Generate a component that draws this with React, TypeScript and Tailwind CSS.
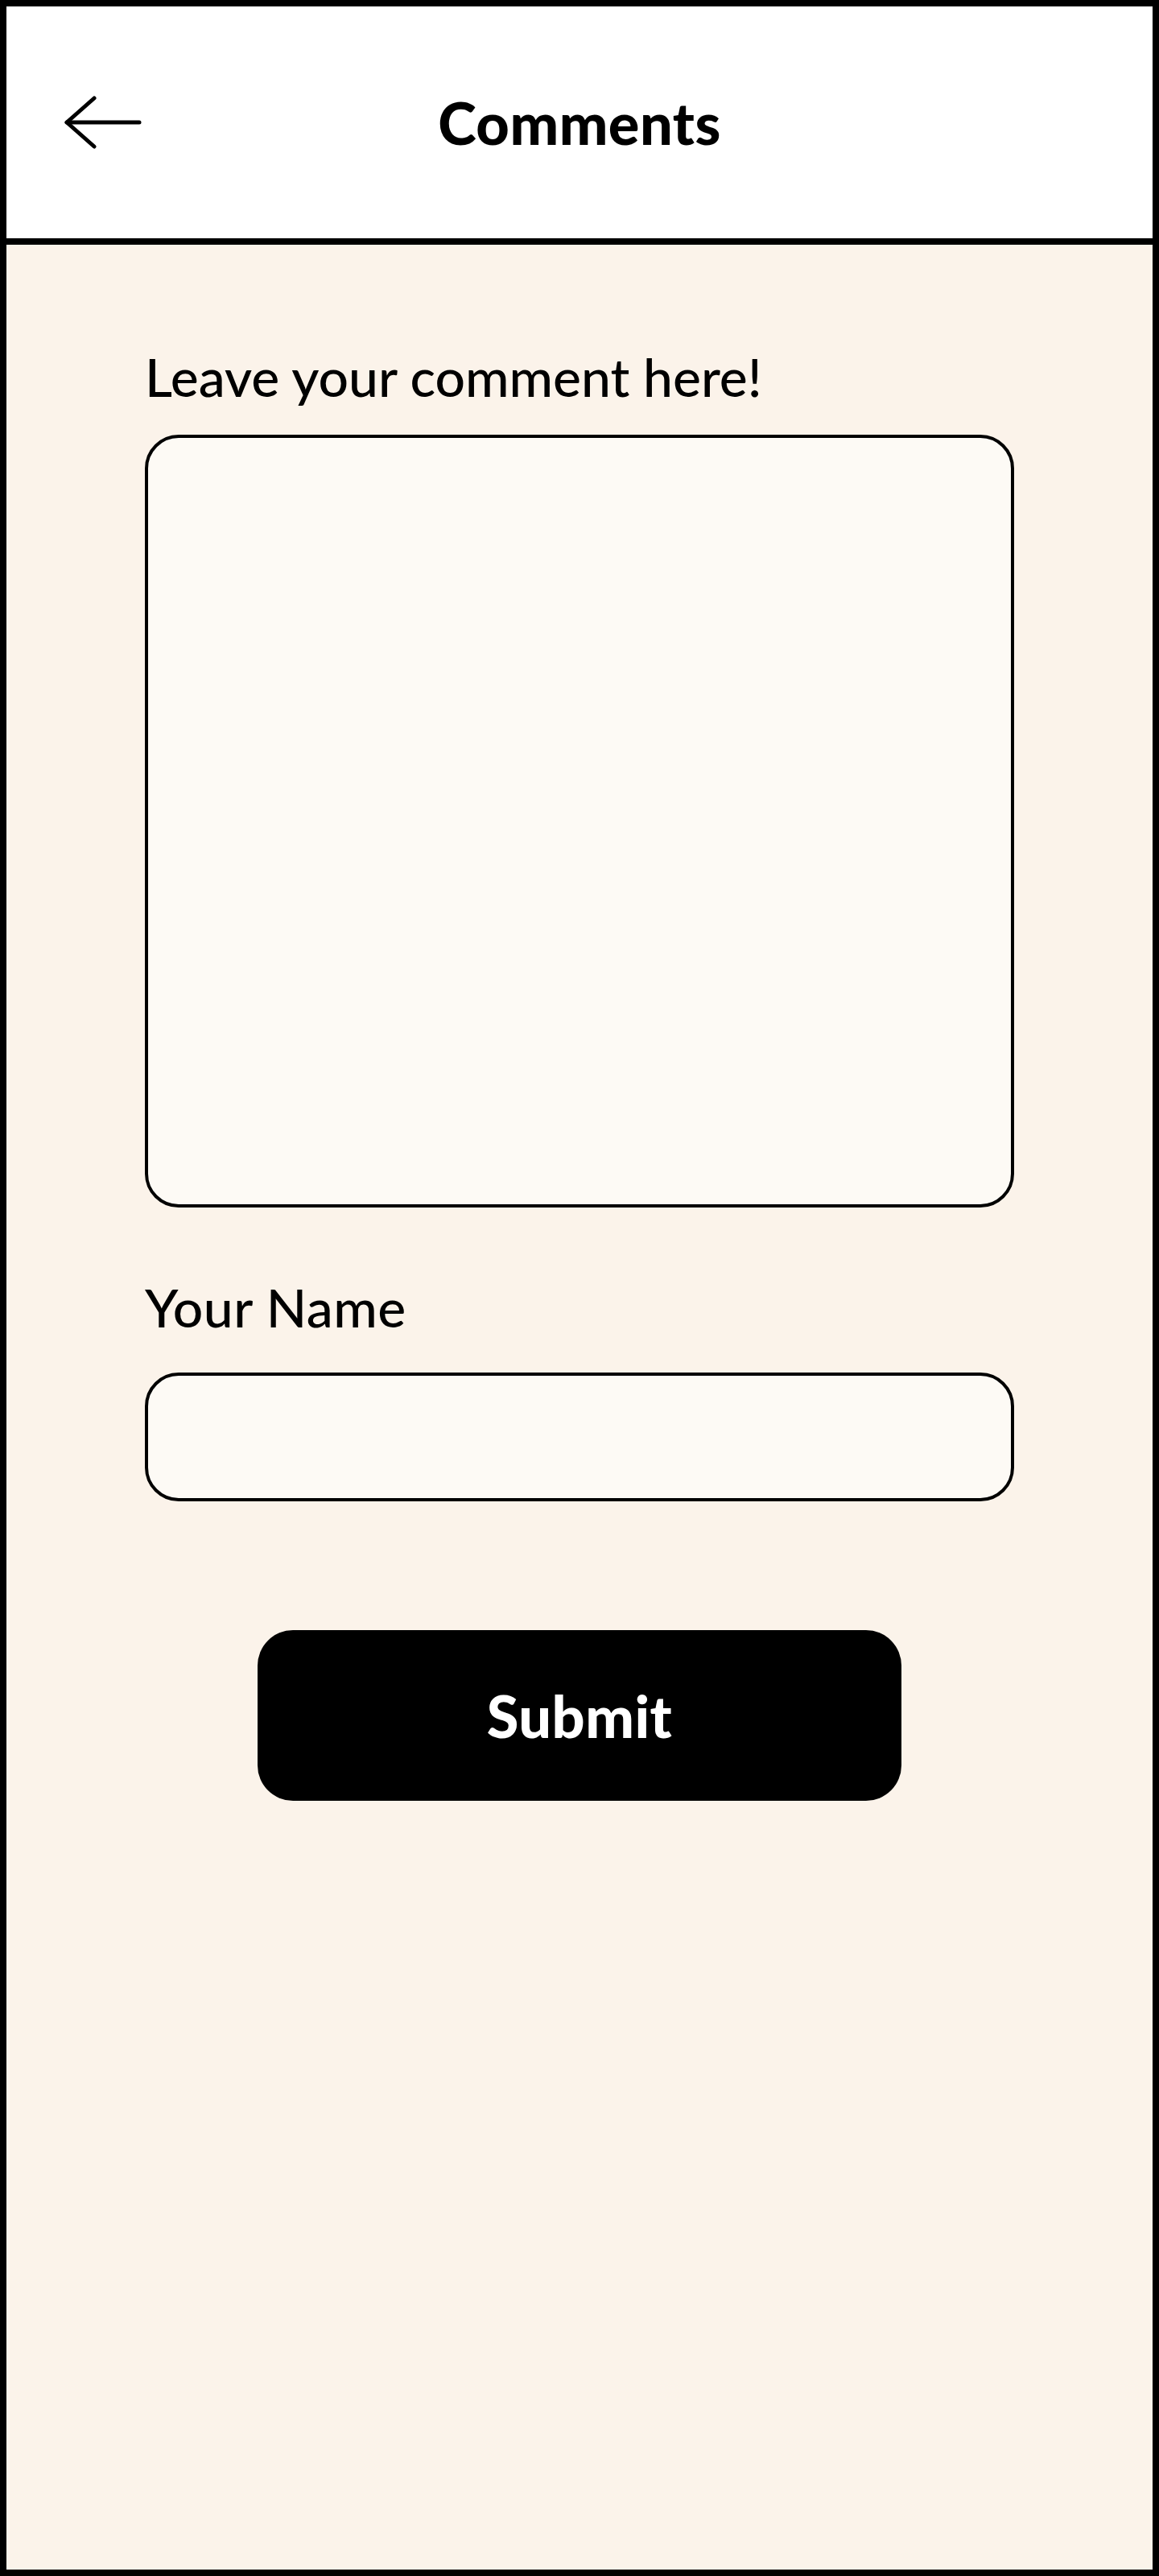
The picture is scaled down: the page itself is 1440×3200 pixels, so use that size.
export default function App() {
  return (
    <div
      className="w-[1440px] h-[3200px] border-8 border-black bg-[#fbf3ea] flex flex-col text-black"
      style={{ fontFamily: "Lato, 'Liberation Sans', sans-serif" }}
    >
      {/* Header */}
      <header className="relative h-[296px] shrink-0 border-b-8 border-black bg-white flex items-center justify-center">
        <button className="absolute left-[71px] top-[111px]" aria-label="Back">
          <svg width="98" height="66" viewBox="0 0 98 66" fill="none" stroke="black" strokeWidth="5" strokeLinecap="round" strokeLinejoin="round">
            <path d="M94 33H4" />
            <path d="M38 3L4 33L38 63" />
          </svg>
        </button>
        <h1 className="text-[72px] font-black leading-none tracking-[0.5px]">Comments</h1>
      </header>

      {/* Form */}
      <main className="flex flex-col px-[172px]">
        <label className="mt-[124px] text-[66px] leading-[80px] font-medium">Leave your comment here!</label>
        <textarea className="mt-[32px] h-[960px] w-full resize-none rounded-[42px] border-4 border-black bg-[#fdfaf5] p-8 text-[48px] outline-none" />

        <label className="mt-[84px] text-[66px] leading-[80px] font-medium tracking-[0.5px]">Your Name</label>
        <input className="mt-[41px] h-[160px] w-full rounded-[42px] border-4 border-black bg-[#fdfaf5] px-8 text-[48px] outline-none" />

        <button className="mt-[160px] mx-auto h-[212px] w-[800px] rounded-[44px] bg-black text-white text-[72px] font-black tracking-[0.5px]">
          Submit
        </button>
      </main>
    </div>
  );
}
